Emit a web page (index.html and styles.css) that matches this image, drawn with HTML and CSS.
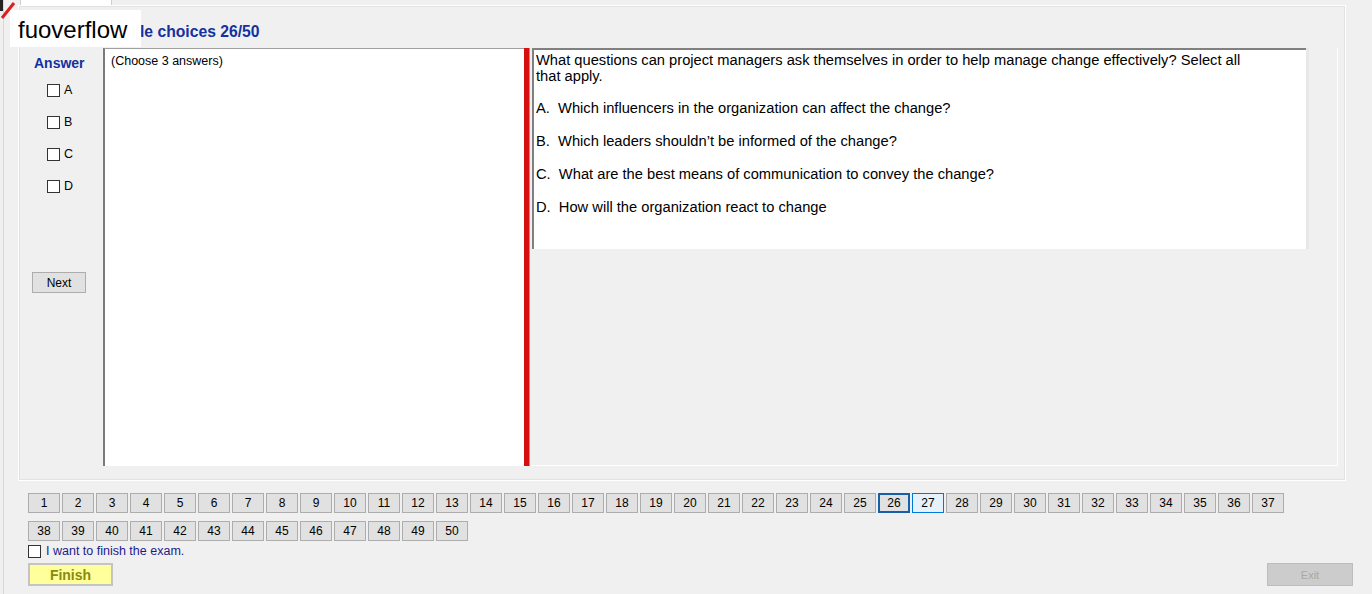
FILE: index.html
```html
<!DOCTYPE html>
<html>
  <head>
    <title>Exam</title>
    <link rel="stylesheet" href="styles.css">
  </head>
  <body>
    <div class="window">
      <div class="tabs"><div class="tab"></div></div>

      <div class="main">
        <div class="title">le choices 26/50</div>
        <div class="content">
          <div class="answer-col">
            <div class="answer-title">Answer</div>
            <label class="opt"><input type="checkbox" class="box" /> A</label>
            <label class="opt"><input type="checkbox" class="box" /> B</label>
            <label class="opt"><input type="checkbox" class="box" /> C</label>
            <label class="opt"><input type="checkbox" class="box" /> D</label>
            <button class="next-btn">Next</button>
          </div>

          <div class="hint-panel">(Choose 3 answers)</div>
          <div class="splitter"></div>

          <div class="question-pane">
            <div class="question-box">
              <p class="question">What questions can project managers ask themselves in order to help manage change effectively? Select all<br />that apply.</p>
              <p class="choice">A.&nbsp; Which influencers in the organization can affect the change?</p>
              <p class="choice">B.&nbsp; Which leaders shouldn&#8217;t be informed of the change?</p>
              <p class="choice">C.&nbsp; What are the best means of communication to convey the change?</p>
              <p class="choice">D.&nbsp; How will the organization react to change</p>
            </div>
          </div>
        </div>
      </div>

      <div class="footer">
        <div class="numbers" id="numbers"></div>
        <label class="finish-check"><input type="checkbox" class="box" /> I want to finish the exam.</label>
        <div class="actions">
          <button class="finish-btn">Finish</button>
          <button class="exit-btn" disabled>Exit</button>
        </div>
      </div>

      <div class="watermark">fuoverflow</div>
    </div>
    <svg class="corner" width="20" height="20" viewBox="0 0 20 20">
      <line x1="1.5" y1="0" x2="1.5" y2="11" stroke="#222" stroke-width="3" />
      <line x1="2" y1="18" x2="14" y2="3" stroke="#d82020" stroke-width="3" />
    </svg>

    <script>
      const numbers = document.getElementById("numbers");
      for (let i = 1; i <= 50; i++) {
        const btn = document.createElement("button");
        btn.className = "num";
        if (i === 26) btn.className += " current";
        if (i === 27) btn.className += " hover";
        btn.textContent = i;
        numbers.appendChild(btn);
      }
    </script>
  </body>
</html>
```

FILE: styles.css
```css
body {
  margin: 0;
  background-color: #f0f0f0;
  font-family: "Liberation Sans", Arial, sans-serif;
  font-size: 12.5px;
  color: #000;
}
.window {
  position: relative;
  height: 594px;
  border-left: 1px solid #d8d8d8;
  margin-left: 3px;
  overflow: hidden;
}
.tabs {
  height: 5px;
  padding-left: 16px;
}
.tab {
  width: 90px;
  height: 5px;
  background-color: #fff;
  border-left: 1px solid #cfcfcf;
  border-right: 1px solid #cfcfcf;
}
.main {
  margin-left: 14px;
  width: 1328px;
  box-sizing: border-box;
  border: 1px solid #fff;
  box-shadow: inset 0 0 0 1px #e2e2e2;
  padding: 16px 6px 14px 11px;
}
.title {
  height: 20px;
  line-height: 20px;
  margin-bottom: 6px;
  padding-left: 110px;
  font-size: 15.7px;
  font-weight: bold;
  color: #1530a0;
}
.content {
  display: flex;
  height: 418px;
}
.answer-col {
  width: 73px;
  display: flex;
  flex-direction: column;
  align-items: flex-start;
}
.answer-title {
  margin-top: 6px;
  margin-left: 4px;
  height: 18px;
  line-height: 18px;
  font-size: 14px;
  font-weight: bold;
  color: #1530a0;
}
.opt {
  display: flex;
  align-items: center;
  height: 32px;
  margin-left: 17px;
  gap: 4px;
}
.opt:first-of-type {
  margin-top: 2px;
}
.box {
  appearance: none;
  -webkit-appearance: none;
  width: 13px;
  height: 13px;
  margin: 0;
  border: 1px solid #333;
  background-color: #fff;
}
.next-btn {
  margin-top: 70px;
  margin-left: 2px;
  width: 54px;
  height: 21px;
  padding: 0;
  font-family: inherit;
  font-size: 12px;
  background-color: #e1e1e1;
  border: 1px solid #adadad;
}
.hint-panel {
  width: 421px;
  box-sizing: border-box;
  background-color: #fff;
  border-left: 2px solid #7a7a7a;
  border-top: 1px solid #a0a0a0;
  padding: 5px 6px;
  line-height: 14px;
}
.splitter {
  width: 5px;
  background-color: #d41010;
  border-right: 1px solid #9a9a9a;
}
.question-pane {
  width: 808px;
  padding-left: 2px;
  box-sizing: border-box;
  border-right: 1px solid #fff;
  border-bottom: 1px solid #fff;
}
.question-box {
  width: 774px;
  height: 201px;
  box-sizing: border-box;
  background-color: #fff;
  border-top: 2px solid #808080;
  border-left: 2px solid #808080;
  box-shadow: 3px 0 0 #e8e8e8;
  padding: 2px 2px;
  font-size: 14.7px;
  line-height: 16px;
}
.question-box p {
  margin: 0;
}
.question-box .choice {
  margin-top: 17px;
}
.question-box .question + .choice {
  margin-top: 16px;
}
.footer {
  padding: 12px 0 0 24px;
}
.numbers {
  display: flex;
  flex-wrap: wrap;
  width: 1258px;
  column-gap: 2px;
  row-gap: 8px;
}
.num {
  width: 32px;
  height: 20px;
  padding: 0;
  font-family: inherit;
  font-size: 12px;
  color: #000;
  background-color: #e1e1e1;
  border: 1px solid #adadad;
}
.num.current {
  border: 2px solid #1660a8;
}
.num.hover {
  background-color: #e5f1fb;
  border: 1px solid #0078d7;
}
.finish-check {
  display: flex;
  align-items: center;
  gap: 5px;
  margin-top: 3px;
  height: 14px;
  color: #1c1c8c;
}
.actions {
  display: flex;
  justify-content: space-between;
  width: 1325px;
  margin-top: 5px;
}
.finish-btn {
  width: 85px;
  height: 23px;
  padding: 0;
  font-family: inherit;
  font-size: 14px;
  font-weight: bold;
  color: #8a8a10;
  background-color: #ffff9c;
  border: 2px solid #c4c4c4;
}
.exit-btn {
  width: 86px;
  height: 23px;
  padding: 0;
  font-family: inherit;
  font-size: 11px;
  color: #a8a8a8;
  background-color: #cccccc;
  border: 1px solid #bdbdbd;
}
.watermark {
  position: absolute;
  left: 6px;
  top: 10px;
  width: 123px;
  height: 37px;
  padding-left: 8px;
  background-color: #fff;
  font-size: 24px;
  line-height: 40px;
  color: #000;
}
.corner {
  position: absolute;
  left: 0;
  top: 0;
}
```
